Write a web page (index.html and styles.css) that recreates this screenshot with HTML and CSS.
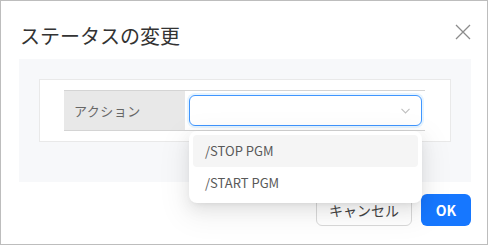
FILE: index.html
```html
<!DOCTYPE html>
<html lang="ja">
<head>
<meta charset="utf-8">
<link rel="stylesheet" href="styles.css">
</head>
<body>
<div class="modal">
  <div class="header">
    <div class="title">ステータスの変更</div>
    <button class="close" aria-label="close">
      <svg width="16" height="16" viewBox="0 0 16 16"><path d="M1 1L15 15M15 1L1 15" stroke="#8c8c8c" stroke-width="1.3" fill="none"/></svg>
    </button>
  </div>
  <div class="panel">
    <div class="card">
      <div class="row">
        <div class="label">アクション</div>
        <div class="value">
          <div class="select">
            <svg class="chev" width="9" height="6" viewBox="0 0 9 6"><path d="M0.5 0.8L4.5 5L8.5 0.8" stroke="#bfbfbf" stroke-width="1.1" fill="none"/></svg>
          </div>
        </div>
      </div>
    </div>
  </div>
  <div class="footer">
    <button class="btn cancel">キャンセル</button>
    <button class="btn ok">OK</button>
  </div>
  <div class="dropdown">
    <div class="opt active">/STOP PGM</div>
    <div class="opt">/START PGM</div>
  </div>
</div>
</body>
</html>
```
FILE: styles.css
```css
html, body {
  margin: 0;
  padding: 0;
  background: #fff;
}
.modal {
  position: relative;
  box-sizing: border-box;
  width: 488px;
  height: 245px;
  border: 1px solid #bdbdbd;
  background: #fff;
  font-family: "Noto Sans CJK JP", "Noto Sans", sans-serif;
  color: #333;
}
.header {
  display: flex;
  justify-content: space-between;
  align-items: flex-start;
  padding: 23px 16px 0 19px;
  height: 35px;
}
.title {
  font-size: 20px;
  line-height: 24px;
  color: #333;
}
.close {
  border: 0;
  background: none;
  padding: 0;
  width: 16px;
  height: 16px;
  margin-top: 0;
  display: block;
}
.close svg { display: block; }
.panel {
  margin-left: 18px;
  width: 452px;
  box-sizing: border-box;
  background: #f7f8fa;
  padding: 20px 20px 40px 20px;
  height: 123px;
}
.card {
  box-sizing: border-box;
  background: #fff;
  border: 1px solid #e9e9e9;
  height: 63px;
  padding: 10px 25px 0 24px;
}
.row {
  display: flex;
  border-top: 1px solid #d4d4d4;
  border-bottom: 1px solid #d4d4d4;
  height: 39px;
}
.label {
  width: 121px;
  background: #e8e8e8;
  font-size: 13px;
  color: #666;
  display: flex;
  align-items: center;
  padding-left: 10px;
  box-sizing: border-box;
  letter-spacing: 0.5px;
}
.value {
  flex: 1;
  padding: 4px 3px 4px 4px;
}
.select {
  box-sizing: border-box;
  height: 31px;
  border: 1px solid #4096ff;
  border-radius: 6px;
  box-shadow: 0 0 0 2px rgba(5, 145, 255, 0.1);
  background: #fff;
  display: flex;
  align-items: center;
  justify-content: flex-end;
  padding-right: 11px;
}
.chev { display: block; }
.footer {
  display: flex;
  justify-content: flex-end;
  gap: 9px;
  padding: 12px 16px 0 0;
}
.btn {
  height: 32px;
  border-radius: 6px;
  font-family: "Noto Sans CJK JP", "Noto Sans", sans-serif;
  font-size: 14px;
  padding: 0;
  cursor: pointer;
}
.cancel {
  width: 96px;
  background: #fff;
  border: 1px solid #d9d9d9;
  color: #444;
}
.ok {
  width: 50px;
  background: #1677ff;
  border: 0;
  color: #fff;
  font-weight: 600;
}
.dropdown {
  position: absolute;
  left: 188px;
  top: 130px;
  width: 233px;
  box-sizing: border-box;
  padding: 4px;
  background: #fff;
  border-radius: 8px;
  box-shadow: 0 6px 16px 0 rgba(0, 0, 0, 0.08), 0 3px 6px -4px rgba(0, 0, 0, 0.12), 0 9px 28px 8px rgba(0, 0, 0, 0.05);
}
.opt {
  height: 32px;
  line-height: 32px;
  padding-left: 12px;
  font-size: 13px;
  color: #595959;
  border-radius: 4px;
}
.opt.active {
  background: #f5f5f5;
}
```
